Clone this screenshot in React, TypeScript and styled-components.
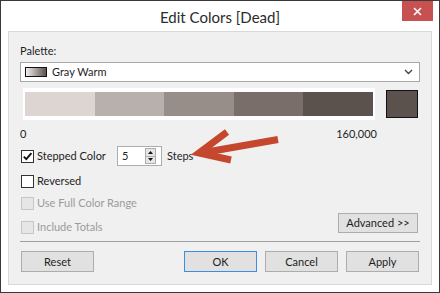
import React from "react";
import styled, { createGlobalStyle } from "styled-components";

const Global = createGlobalStyle`
  html, body { margin: 0; padding: 0; background: #fff; }
  body { font-family: "Segoe UI", Lato, "Noto Sans", sans-serif; font-size: 11px; color: #1e1e1e; }
  * { box-sizing: border-box; }
`;

const Window = styled.div`
  position: relative;
  width: 440px;
  height: 293px;
  border: 1px solid #3a3a3a;
  background: #ffffff;
  display: flex;
  flex-direction: column;
`;

const TitleBar = styled.div`
  height: 30px;
  display: grid;
  grid-template-columns: 1fr auto 1fr;
  align-items: start;
`;

const Title = styled.div`
  grid-column: 2;
  font-size: 15px;
  line-height: 20px;
  padding-top: 6px;
  color: #2b2b2b;
`;

const CloseButton = styled.div`
  grid-column: 3;
  justify-self: end;
  margin-right: 6px;
  width: 31px;
  height: 20px;
  background: #c75050;
  display: flex;
  align-items: center;
  justify-content: center;
`;

const Panel = styled.div`
  flex: 1;
  margin: 0 7px 7px 7px;
  border: 1px solid #d9d9d9;
  background: #f0f0f0;
  padding: 11px 11px 0 11px;
  display: flex;
  flex-direction: column;
`;

const Label = styled.div<{ $mt?: number }>`
  line-height: 16px;
  height: 16px;
  margin-top: ${(p) => p.$mt ?? 0}px;
  color: #1e1e1e;
`;

const Select = styled.div`
  margin-top: 3px;
  height: 20px;
  background: #fff;
  border: 1px solid #a7a7a7;
  display: flex;
  align-items: center;
  padding: 0 6px 0 4px;
  gap: 5px;
`;

const Swatch = styled.div`
  width: 22px;
  height: 10px;
  border: 1px solid #111;
  background: linear-gradient(to right, #f2efee, #5b514d);
`;

const SelectText = styled.span`
  flex: 1;
  line-height: 16px;
`;

const BarRow = styled.div`
  margin-top: 6px;
  display: flex;
  align-items: center;
  gap: 11px;
  padding-left: 3px;
`;

const BarFrame = styled.div`
  width: 352px;
  height: 32px;
  background: #fff;
  padding: 4px 2px;
  display: flex;
`;

const Segment = styled.div<{ $c: string }>`
  flex: 1;
  background: ${(p) => p.$c};
`;

const EndSwatch = styled.div<{ $c: string }>`
  width: 32px;
  height: 28px;
  border: 1px solid #111;
  background: ${(p) => p.$c};
`;

const RangeRow = styled.div`
  margin-top: 6px;
  width: 357px;
  height: 16px;
  line-height: 16px;
  display: flex;
  justify-content: space-between;
`;

const CheckRow = styled.div<{ $mt?: number }>`
  margin-top: ${(p) => p.$mt ?? 0}px;
  height: 20px;
  display: flex;
  align-items: center;
`;

const Box = styled.div<{ $disabled?: boolean }>`
  width: 13px;
  height: 13px;
  margin-left: 1px;
  border: 1px solid ${(p) => (p.$disabled ? "#c6c6c6" : "#333")};
  background: ${(p) => (p.$disabled ? "#e6e6e6" : "#fff")};
  display: flex;
  align-items: center;
  justify-content: center;
`;

const CheckLabel = styled.span<{ $disabled?: boolean; $w?: number }>`
  margin-left: 3px;
  line-height: 16px;
  color: ${(p) => (p.$disabled ? "#9b9b9b" : "#1e1e1e")};
  ${(p) => (p.$w ? `width: ${p.$w}px;` : "")}
`;

const Spin = styled.div`
  width: 45px;
  height: 20px;
  background: #fff;
  border: 1px solid #abadb3;
  display: flex;
  align-items: center;
  padding-left: 4px;
`;

const SpinValue = styled.span`
  flex: 1;
  line-height: 16px;
`;

const SpinButtons = styled.div`
  width: 11px;
  height: 16px;
  margin-right: 5px;
  display: flex;
  flex-direction: column;
  border: 1px solid #acacac;
  background: #e6e6e6;
`;

const SpinBtn = styled.div<{ $top?: boolean }>`
  flex: 1;
  display: flex;
  align-items: center;
  justify-content: center;
  ${(p) => (p.$top ? "border-bottom: 1px solid #acacac;" : "")}
`;

const StepsLabel = styled.span`
  margin-left: 5px;
  line-height: 16px;
`;

const LastRow = styled.div`
  display: flex;
  justify-content: space-between;
  align-items: flex-start;
`;

const Button = styled.div<{ $w: number; $primary?: boolean; $h?: number }>`
  width: ${(p) => p.$w}px;
  height: ${(p) => p.$h ?? 21}px;
  border: 1px solid ${(p) => (p.$primary ? "#3c8fde" : "#adadad")};
  background: #e1e1e1;
  display: flex;
  align-items: center;
  justify-content: center;
  color: #1e1e1e;
  line-height: 16px;
`;

const Separator = styled.div`
  margin-top: 4px;
  height: 1px;
  background: #a0a0a0;
`;

const ButtonRow = styled.div`
  margin-top: 9px;
  display: flex;
  align-items: center;
  padding: 0 1px;
  gap: 8px;
`;

const Spacer = styled.div`
  flex: 1;
`;

const ArrowLayer = styled.svg`
  position: absolute;
  left: 0;
  top: 0;
  pointer-events: none;
`;

const colors = ["#dcd5d2", "#b8b0ac", "#978d89", "#796e6a", "#5b514d"];

const Check = () => (
  <svg width="11" height="11" viewBox="0 0 11 11">
    <path d="M1.8 5.6 L4.3 8.2 L9.4 2.2" stroke="#111" strokeWidth="1.9" fill="none" />
  </svg>
);

export default function App() {
  return (
    <>
      <Global />
      <Window>
        <TitleBar>
          <Title>Edit Colors [Dead]</Title>
          <CloseButton>
            <svg width="9" height="9" viewBox="0 0 9 9">
              <path d="M1 1 L8 8 M8 1 L1 8" stroke="#fff" strokeWidth="1.6" />
            </svg>
          </CloseButton>
        </TitleBar>
        <Panel>
          <Label>Palette:</Label>
          <Select>
            <Swatch />
            <SelectText>Gray Warm</SelectText>
            <svg width="9" height="6" viewBox="0 0 9 6">
              <path d="M1 1 L4.5 4.5 L8 1" stroke="#444" strokeWidth="1.4" fill="none" />
            </svg>
          </Select>
          <BarRow>
            <BarFrame>
              {colors.map((c) => (
                <Segment key={c} $c={c} />
              ))}
            </BarFrame>
            <EndSwatch $c={colors[4]} />
          </BarRow>
          <RangeRow>
            <span>0</span>
            <span>160,000</span>
          </RangeRow>
          <CheckRow $mt={4}>
            <Box>
              <Check />
            </Box>
            <CheckLabel $w={80}>Stepped Color</CheckLabel>
            <Spin>
              <SpinValue>5</SpinValue>
              <SpinButtons>
                <SpinBtn $top>
                  <svg width="5" height="3" viewBox="0 0 5 3">
                    <path d="M0 3 L2.5 0 L5 3 Z" fill="#111" />
                  </svg>
                </SpinBtn>
                <SpinBtn>
                  <svg width="5" height="3" viewBox="0 0 5 3">
                    <path d="M0 0 L2.5 3 L5 0 Z" fill="#111" />
                  </svg>
                </SpinBtn>
              </SpinButtons>
            </Spin>
            <StepsLabel>Steps</StepsLabel>
          </CheckRow>
          <CheckRow $mt={5}>
            <Box />
            <CheckLabel>Reversed</CheckLabel>
          </CheckRow>
          <CheckRow $mt={2}>
            <Box $disabled />
            <CheckLabel $disabled>Use Full Color Range</CheckLabel>
          </CheckRow>
          <LastRow>
            <CheckRow $mt={4}>
              <Box $disabled />
              <CheckLabel $disabled>Include Totals</CheckLabel>
            </CheckRow>
            <Button $w={80} $h={20} style={{ marginRight: 2 }}>
              Advanced &gt;&gt;
            </Button>
          </LastRow>
          <Separator />
          <ButtonRow>
            <Button $w={73}>Reset</Button>
            <Spacer />
            <Button $w={73} $primary>
              OK
            </Button>
            <Button $w={73}>Cancel</Button>
            <Button $w={73}>Apply</Button>
          </ButtonRow>
        </Panel>
        <ArrowLayer width="440" height="293" viewBox="0 0 440 293">
          <path d="M277 138.5 L203 151.5" stroke="#c4472e" strokeWidth="7" fill="none" />
          <path d="M226 131 L198 152 L230 159" stroke="#c4472e" strokeWidth="7" fill="none" strokeLinejoin="miter" />
        </ArrowLayer>
      </Window>
    </>
  );
}
